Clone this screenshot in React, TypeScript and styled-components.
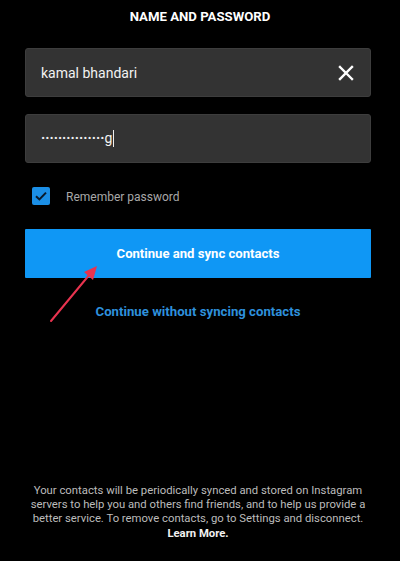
import { createGlobalStyle, styled } from 'styled-components';

const GlobalStyle = createGlobalStyle`
  html, body {
    margin: 0;
    padding: 0;
    background: #000;
  }
  body {
    font-family: Roboto, "Liberation Sans", sans-serif;
  }
`;

const Screen = styled.div`
  width: 400px;
  height: 561px;
  background: #000;
  display: flex;
  flex-direction: column;
  position: relative;
  overflow: hidden;
`;

const Title = styled.div`
  color: #fff;
  font-weight: 700;
  font-size: 13.2px;
  text-align: center;
  padding-top: 8px;
  height: 18px;
  line-height: 18px;
`;

const Form = styled.div`
  display: flex;
  flex-direction: column;
  padding: 22px 29px 0 25px;
`;

const Field = styled.div<{ $gap?: number }>`
  height: 49px;
  box-sizing: border-box;
  margin-top: ${(p) => p.$gap ?? 0}px;
  background: #333;
  border: 1px solid #3d3d3d;
  border-radius: 3px;
  display: flex;
  align-items: center;
  padding: 0 15px 0 15px;
  color: #f2f2f2;
  font-size: 14px;
`;

const FieldText = styled.span`
  flex: 1;
`;

const Dots = styled.span`
  font-weight: 700;
`;

const Cursor = styled.span`
  display: inline-block;
  width: 1px;
  height: 17px;
  background: #eee;
  vertical-align: -4px;
  margin-left: 1px;
`;

const ClearIcon = styled.svg`
  width: 16px;
  height: 16px;
  margin-right: 1px;
`;

const CheckRow = styled.div`
  display: flex;
  align-items: center;
  margin-top: 24px;
  padding-left: 7px;
  height: 18px;
`;

const CheckBox = styled.div`
  width: 18px;
  height: 18px;
  border-radius: 2px;
  background: #1b8fe6;
  display: flex;
  align-items: center;
  justify-content: center;
`;

const CheckLabel = styled.span`
  margin-left: 16px;
  margin-top: 2px;
  color: #a8a8a8;
  font-size: 12px;
`;

const PrimaryButton = styled.div`
  margin-top: 24px;
  height: 49px;
  background: #0f97f5;
  border-radius: 1px;
  display: flex;
  align-items: center;
  justify-content: center;
  color: #fff;
  font-weight: 700;
  font-size: 13.1px;
`;

const LinkButton = styled.div`
  margin-top: 26px;
  text-align: center;
  color: #2e90dc;
  font-weight: 700;
  font-size: 13.2px;
`;

const Footer = styled.div`
  margin-top: auto;
  margin-bottom: 20px;
  padding: 0 32px 0 28px;
  text-align: center;
  color: #bcbcbc;
  font-size: 11.3px;
  line-height: 14.3px;
`;

const LearnMore = styled.span`
  color: #f2f2f2;
  font-weight: 700;
`;

const Arrow = styled.svg`
  position: absolute;
  left: 44px;
  top: 260px;
  width: 60px;
  height: 68px;
`;

export default function App() {
  return (
    <Screen>
      <GlobalStyle />
      <Title>NAME AND PASSWORD</Title>
      <Form>
        <Field>
          <FieldText>kamal bhandari</FieldText>
          <ClearIcon viewBox="0 0 16 16">
            <path d="M2 2L14 14M14 2L2 14" stroke="#fff" strokeWidth="2.4" strokeLinecap="square" />
          </ClearIcon>
        </Field>
        <Field $gap={17}>
          <FieldText>
            <Dots>···············</Dots>g
            <Cursor />
          </FieldText>
        </Field>
        <CheckRow>
          <CheckBox>
            <svg width="14" height="14" viewBox="0 0 14 14">
              <path d="M2 7.2L5.4 10.4L12 3.6" fill="none" stroke="#0a1a2a" strokeWidth="2" />
            </svg>
          </CheckBox>
          <CheckLabel>Remember password</CheckLabel>
        </CheckRow>
        <PrimaryButton>Continue and sync contacts</PrimaryButton>
        <LinkButton>Continue without syncing contacts</LinkButton>
      </Form>
      <Footer>
        Your contacts will be periodically synced and stored on Instagram servers to help you and
        others find friends, and to help us provide a better service. To remove contacts, go to
        Settings and disconnect. <LearnMore>Learn More.</LearnMore>
      </Footer>
      <Arrow viewBox="0 0 60 68">
        <path d="M7 61L46 14" stroke="#e8334f" strokeWidth="2" strokeLinecap="round" />
        <path d="M53 6L40 12L49 20Z" fill="#e8334f" />
      </Arrow>
    </Screen>
  );
}
